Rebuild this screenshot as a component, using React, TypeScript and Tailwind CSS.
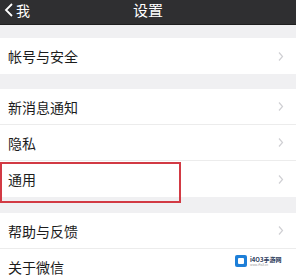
import React from 'react';

const font = { fontFamily: '"Noto Sans CJK SC", "Liberation Sans", sans-serif' };

const Chevron: React.FC = () => (
  <svg width="6" height="11" viewBox="0 0 6 11" className="shrink-0">
    <path d="M1 1.5 L4.5 5.5 L1 9.5" fill="none" stroke="#d0d0d4" strokeWidth="1.2" />
  </svg>
);

const Row: React.FC<{ label: string; last?: boolean; chevron?: boolean }> = ({ label, last, chevron = true }) => (
  <div className={`h-9 flex items-center justify-between pl-2 pr-3 bg-white ${last ? '' : 'border-b border-[#ececec]'}`}>
    <span className="text-[14px] text-[#1c1c1c] leading-none">{label}</span>
    {chevron && <Chevron />}
  </div>
);

export default function App() {
  return (
    <div className="w-[296px] h-[280px] overflow-hidden bg-[#f0f0f2] relative" style={font}>
      <div className="h-[25px] bg-[#2f2f31] border-b border-[#1f1f1f] flex items-start pt-[2px] relative">
        <div className="flex items-center pl-[4px] text-white">
          <svg width="10" height="16" viewBox="0 0 10 16">
            <path d="M8 2 L2 8 L8 14" fill="none" stroke="#ffffff" strokeWidth="1.8" />
          </svg>
          <span className="text-[14px] leading-[16px] ml-[2px]">我</span>
        </div>
        <div className="absolute left-0 right-0 top-[2px] text-center text-white text-[15px] leading-[16px]">设置</div>
      </div>

      <div className="mt-[13px]">
        <Row label="帐号与安全" last />
      </div>

      <div className="mt-[15px]">
        <Row label="新消息通知" />
        <Row label="隐私" />
        <Row label="通用" last />
      </div>

      <div className="mt-[16px]">
        <Row label="帮助与反馈" />
        <Row label="关于微信" chevron={false} last />
      </div>

      <div className="absolute left-0 top-[162px] w-[181px] h-[41px] border-2 border-[#d23a44]" />

      <div className="absolute left-[235px] top-[255px] flex items-center gap-[3px]">
        <div className="w-[12px] h-[12px] rounded-[2px] bg-[#1e7fd8] flex items-center justify-center">
          <div className="w-[6px] h-[6px] bg-white rounded-[1px]" />
        </div>
        <div className="flex flex-col">
          <span className="text-[6px] leading-[7px] font-bold text-[#2a3a5a]">i4O3手游网</span>
          <span className="text-[3px] leading-[4px] text-[#999]">www.i4o3.cn</span>
        </div>
      </div>
    </div>
  );
}
